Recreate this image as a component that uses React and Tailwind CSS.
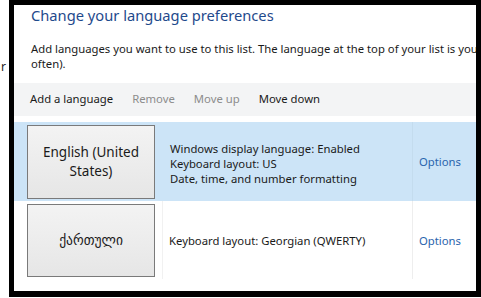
export default function App() {
  const font = { fontFamily: '"Noto Sans", "DejaVu Sans", sans-serif' };

  return (
    <div className="flex w-[481px] h-[298px] bg-white overflow-hidden text-[11.3px] text-[#1a1a1a]" style={font}>
      {/* background window bit on the left */}
      <div className="w-[9px] shrink-0 pt-[59px] pl-[1px] leading-[15px] text-[12px] overflow-hidden">r</div>

      <div className="w-[472px] h-[297px] shrink-0 border-black border-solid border-l-[5px] border-t-[5px] border-r-[5px] border-b-[6px] overflow-hidden flex flex-col">
        <h1 className="pl-[17px] h-[21px] text-[14.7px] leading-[21px] text-[#1f4a8c] whitespace-nowrap">
          Change your language preferences
        </h1>

        <div className="pl-[17px] mt-[15px] leading-[15px]">
          <div className="whitespace-nowrap">
            Add languages you want to use to this list. The language at the top of your list is your primary language (the one you want to see and use most
          </div>
          <div>often).</div>
        </div>

        {/* toolbar */}
        <div className="mt-[12px] h-[33px] bg-[#f3f4f5] flex items-center pl-[16px] gap-[19px] shrink-0">
          <span>Add a language</span>
          <span className="text-[#8c8c8c]">Remove</span>
          <span className="text-[#8c8c8c]">Move up</span>
          <span>Move down</span>
        </div>

        {/* selected language */}
        <div className="mt-[6px] h-[79px] bg-[#cce4f7] flex shrink-0">
          <div className="pl-[13px] pt-[3px] pr-[8px]">
            <div className="w-[128px] h-[74px] border border-[#7a7a7a] bg-gradient-to-b from-[#f3f3f3] to-[#e6e6e6] flex items-center justify-center text-center text-[13.5px] leading-[19px]">
              English (United<br />States)
            </div>
          </div>
          <div className="flex-1 pl-[7px] pt-[4px] flex flex-col justify-center leading-[15px]">
            <div>Windows display language: Enabled</div>
            <div>Keyboard layout: US</div>
            <div>Date, time, and number formatting</div>
          </div>
          <div className="w-[64px] border-l border-[#c4dcee] pl-[6px] pt-[2px] flex items-center text-[#2a64ad]">
            Options
          </div>
        </div>

        {/* second language */}
        <div className="h-[89px] flex shrink-0">
          <div className="pl-[13px] pt-[3px] pr-[7px]">
            <div className="w-[128px] h-[73px] border border-[#7a7a7a] bg-gradient-to-b from-[#f3f3f3] to-[#e6e6e6] flex items-center justify-center text-[13.5px]">
              ქართული
            </div>
          </div>
          <div className="flex-1 border-l border-[#f1f1f1] pl-[6px] pt-[32px] leading-[15px] h-[78px]">
            Keyboard layout: Georgian (QWERTY)
          </div>
          <div className="w-[64px] border-l border-[#eeeeee] pl-[6px] pt-[32px] leading-[15px] h-[78px] text-[#2a64ad]">
            Options
          </div>
        </div>
      </div>
    </div>
  );
}
